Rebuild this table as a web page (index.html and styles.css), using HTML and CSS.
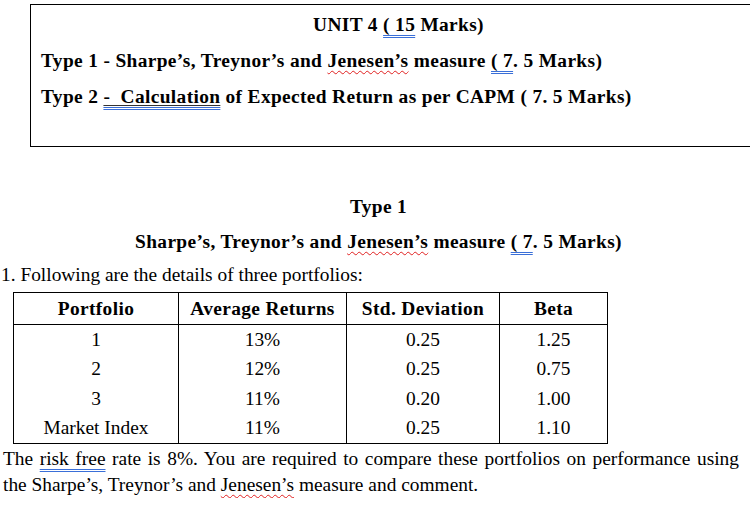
FILE: index.html
```html
<!DOCTYPE html>
<html>
<head>
<meta charset="utf-8">
<link rel="stylesheet" href="styles.css">
</head>
<body>
<div class="page">
  <div class="box">
    <p class="center bold">UNIT 4 <span class="gram">( 15</span> Marks)</p>
    <p class="bold">Type 1 - Sharpe’s, Treynor’s and <span class="spell">Jenesen’s</span> measure <span class="gram">( 7</span>. 5 Marks)</p>
    <p class="bold">Type 2 <span class="gram"><span class="ul">-&nbsp; Calculation</span></span> of Expected Return as per CAPM ( 7. 5 Marks)</p>
  </div>

  <p class="center bold type-title">Type 1</p>
  <p class="center bold sub-title">Sharpe’s, Treynor’s and <span class="spell">Jenesen’s</span> measure <span class="gram">( 7</span>. 5 Marks)</p>
  <p class="intro">1. Following are the details of three portfolios:</p>

  <table class="data">
    <thead>
      <tr><th class="c1">Portfolio</th><th class="c2">Average Returns</th><th class="c3">Std. Deviation</th><th class="c4">Beta</th></tr>
    </thead>
    <tbody>
      <tr><td>1</td><td>13%</td><td>0.25</td><td>1.25</td></tr>
      <tr><td>2</td><td>12%</td><td>0.25</td><td>0.75</td></tr>
      <tr><td>3</td><td>11%</td><td>0.20</td><td>1.00</td></tr>
      <tr><td>Market Index</td><td>11%</td><td>0.25</td><td>1.10</td></tr>
    </tbody>
  </table>

  <p class="para">The <span class="gram">risk free</span> rate is 8%. You are required to compare these portfolios on performance using the Sharpe’s, Treynor’s and <span class="spell">Jenesen’s</span> measure and comment.</p>
</div>
</body>
</html>
```

FILE: styles.css
```css
html, body {
  margin: 0;
  padding: 0;
  background: #ffffff;
  overflow: hidden;
}

body {
  font-family: "Liberation Serif", "Times New Roman", serif;
  font-size: 19.4px;
  color: #000000;
}

.page {
  width: 755px;
  padding-left: 1px;
}

p {
  margin: 0;
}

.center {
  text-align: center;
}

.bold {
  font-weight: bold;
  letter-spacing: 0.35px;
}

.box {
  margin: 4px 0 0 29px;
  width: 725px;
  border: 1px solid #000;
  padding: 2px 0 31px 10px;
  line-height: 36px;
}

.box .center {
  padding-right: 10px;
}

.spell {
  text-decoration: underline wavy #e02020;
  text-decoration-thickness: 1px;
  text-underline-offset: 3px;
}

.gram {
  text-decoration: underline double #3a6fd8;
  text-decoration-thickness: 1px;
  text-underline-offset: 4px;
}

.ul {
  text-decoration: underline #333;
  text-decoration-thickness: 1px;
  text-underline-offset: 2px;
}

.type-title {
  margin-top: 42px;
  line-height: 35px;
}

.sub-title {
  line-height: 35px;
}

.intro {
  line-height: 32px;
}

.data {
  border-collapse: collapse;
  margin-left: 12px;
  margin-top: 1px;
}

.data th,
.data td {
  border-left: 1px solid #000;
  border-right: 1px solid #000;
  text-align: center;
  padding: 0;
}

.data th {
  border-top: 1px solid #000;
  border-bottom: 1px solid #000;
  height: 31px;
  font-weight: bold;
  letter-spacing: 0.35px;
}

.data td {
  height: 29.5px;
}

.data tbody tr:last-child td {
  border-bottom: 1px solid #000;
}

.c1 { width: 164px; }
.c2 { width: 167px; }
.c3 { width: 152px; }
.c4 { width: 107px; }

.para {
  width: 736px;
  line-height: 26px;
  margin-top: 2px;
  padding-left: 2px;
  text-align: justify;
}
```
